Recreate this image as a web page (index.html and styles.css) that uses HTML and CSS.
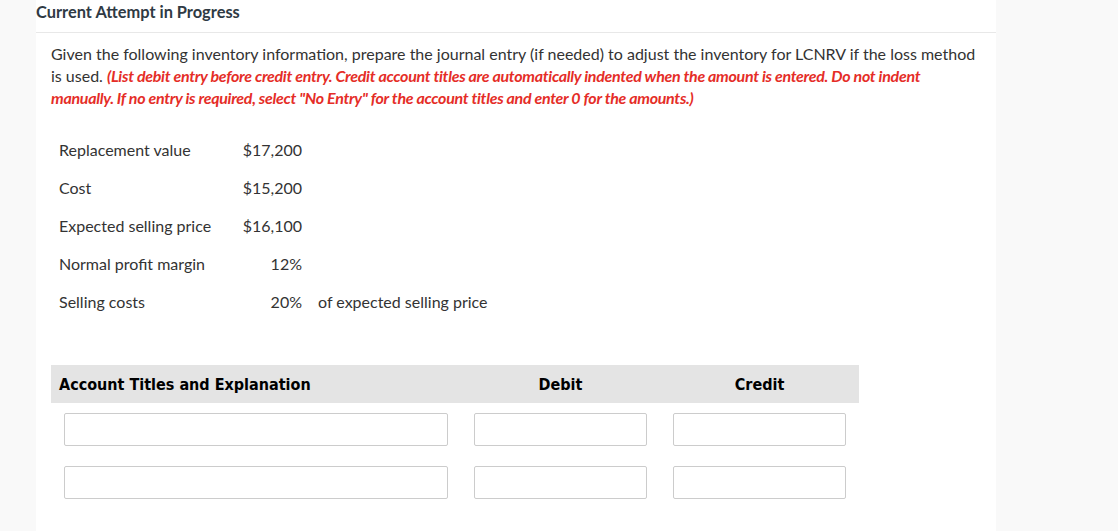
FILE: index.html
```html
<!DOCTYPE html>
<html lang="en">
<head>
	<meta charset="UTF-8">
	<title>Current Attempt in Progress</title>
	<link rel="stylesheet" href="styles.css">
</head>
<body>
<div class="panel">
	<div class="attempt">Current Attempt in Progress</div>

	<div class="question">
		<p class="prompt">
			Given the following inventory information, prepare the journal entry (if needed) to adjust the inventory for LCNRV if the loss method is used.
			<em class="note">(List debit entry before credit entry. Credit account titles are automatically indented when the amount is entered. Do not indent manually. If no entry is required, select "No Entry" for the account titles and enter 0 for the amounts.)</em>
		</p>

		<div class="facts">
			<span>Replacement value</span><span class="num">$17,200</span><span></span>
			<span>Cost</span><span class="num">$15,200</span><span></span>
			<span>Expected selling price</span><span class="num">$16,100</span><span></span>
			<span>Normal profit margin</span><span class="num">12%</span><span></span>
			<span>Selling costs</span><span class="num">20%</span><span>of expected selling price</span>
		</div>

		<div class="journal">
			<div class="jhead">Account Titles and Explanation</div>
			<div class="jhead center">Debit</div>
			<div class="jhead center">Credit</div>

			<div class="jcell"><input type="text"></div>
			<div class="jcell"><input type="text"></div>
			<div class="jcell"><input type="text"></div>

			<div class="jcell"><input type="text"></div>
			<div class="jcell"><input type="text"></div>
			<div class="jcell"><input type="text"></div>
		</div>
	</div>
</div>
</body>
</html>
```

FILE: styles.css
```css
html, body {
    height: 100%;
}

body {
    margin: 0;
    background: #f9f9f9;
    font: 16px "Lato", "Noto Sans", sans-serif;
    color: #333;
}

.panel {
    width: 960px;
    min-height: 100%;
    margin-left: 36px;
    background: #fff;
}

.attempt {
    height: 24px;
    line-height: 24px;
    padding-bottom: 8px;
    margin-bottom: 10px;
    font-size: 16.4px;
    font-weight: bold;
    color: #2f3a44;
    border-bottom: 1px solid #e8e8e8;
}

.question {
    padding: 0 12px 0 15px;
}

.prompt {
    margin: 0;
    line-height: 22px;
}

.note {
    font-weight: bold;
    color: #e52d27;
    letter-spacing: -.3px;
}

.facts {
    display: grid;
    grid-template-columns: 184px 75px auto;
    margin-top: 21px;
}

.facts span {
    display: flex;
    align-items: center;
    height: 38px;
    padding: 0 8px;
}

.facts .num {
    justify-content: flex-end;
}

.journal {
    display: grid;
    grid-template-columns: 410px 199px 199px;
    margin-top: 45px;
}

.jhead {
    display: flex;
    align-items: center;
    height: 38px;
    padding-left: 8px;
    background: #e4e4e4;
    font: bold 16px "DejaVu Sans Condensed", "Liberation Sans", sans-serif;
    color: #000;
}

.jhead.center {
    justify-content: center;
    padding-left: 0;
}

.jcell {
    padding: 10px 13px;
}

.jcell input {
    display: block;
    box-sizing: border-box;
    width: 100%;
    height: 33px;
    margin: 0;
    border: 1px solid #ccc;
    border-radius: 2px;
    background: #fff;
}
```
